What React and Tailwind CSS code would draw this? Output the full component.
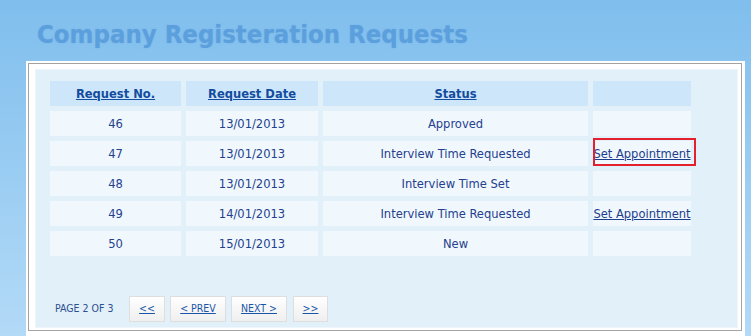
const rows = [
  { no: 46, date: '13/01/2013', status: 'Approved', action: false },
  { no: 47, date: '13/01/2013', status: 'Interview Time Requested', action: true, marked: true },
  { no: 48, date: '13/01/2013', status: 'Interview Time Set', action: false },
  { no: 49, date: '14/01/2013', status: 'Interview Time Requested', action: true },
  { no: 50, date: '15/01/2013', status: 'New', action: false },
];

const font = { fontFamily: '"DejaVu Sans Condensed", "DejaVu Sans", Tahoma, sans-serif' };

function PageButton({ label, width }) {
  return (
    <button
      className={`${width} h-[26px] flex items-center justify-center border border-[#dedede] bg-gradient-to-b from-[#ffffff] to-[#efefef] text-[10.5px] text-[#1a55a8] underline`}
    >
      {label}
    </button>
  );
}

export default function App() {
  return (
    <div
      className="w-[751px] h-[336px] overflow-hidden bg-gradient-to-b from-[#7fbeed] to-[#b3daf7] pt-[19px]"
      style={font}
    >
      <h1 className="pl-[37px] h-[30px] leading-[30px] text-[25.5px] font-bold text-[#5b9fdc] [text-shadow:0_0_2px_#76b2e6]">
        Company Registeration Requests
      </h1>

      <div className="mt-[12px] ml-[26px] w-[719px] bg-white pt-[2px] pl-[2px] pr-[3px] pb-[6px]">
        <div className="border border-[#a3a3a3] pt-[5px] pl-[6px] pr-[3px] pb-[2px]">
          <div className="bg-[#e2f0fa] border border-[#eef6fc] pt-[11px] pl-[14px] pb-[5px] h-[259px]">
            <div className="grid grid-cols-[131px_132px_265px_98px] auto-rows-[25px] gap-[5px] text-[12.8px] text-[#24408e]">
              <div className="bg-[#cde6f9] flex items-center justify-center font-bold text-[#134c9f] underline">
                Request No.
              </div>
              <div className="bg-[#cde6f9] flex items-center justify-center font-bold text-[#134c9f] underline">
                Request Date
              </div>
              <div className="bg-[#cde6f9] flex items-center justify-center font-bold text-[#134c9f] underline">
                Status
              </div>
              <div className="bg-[#cde6f9]"></div>

              {rows.map((r) => (
                <div key={r.no} className="contents">
                  <div className="bg-[#f1f8fd] flex items-center justify-center">{r.no}</div>
                  <div className="bg-[#f1f8fd] flex items-center justify-center">{r.date}</div>
                  <div className="bg-[#f1f8fd] flex items-center justify-center">{r.status}</div>
                  <div className="bg-[#f1f8fd] flex items-center justify-center relative">
                    {r.action && (
                      <a href="#" className="text-[#1d3d8d] underline whitespace-nowrap">
                        Set Appointment
                      </a>
                    )}
                    {r.marked && (
                      <div className="absolute left-0 top-[-3px] w-[103px] h-[28px] border-2 border-[#e3202b]"></div>
                    )}
                  </div>
                </div>
              ))}
            </div>

            <div className="mt-[40px] flex items-center">
              <span className="ml-[5px] w-[74px] text-[10.5px] text-[#2d4f90]">PAGE 2 OF 3</span>
              <div className="flex">
                <PageButton label="<<" width="w-[36px]" />
                <div className="ml-[5px]">
                  <PageButton label="< PREV" width="w-[56px]" />
                </div>
                <div className="ml-[5px]">
                  <PageButton label="NEXT >" width="w-[56px]" />
                </div>
                <div className="ml-[6px]">
                  <PageButton label=">>" width="w-[35px]" />
                </div>
              </div>
            </div>
          </div>
        </div>
      </div>
    </div>
  );
}
